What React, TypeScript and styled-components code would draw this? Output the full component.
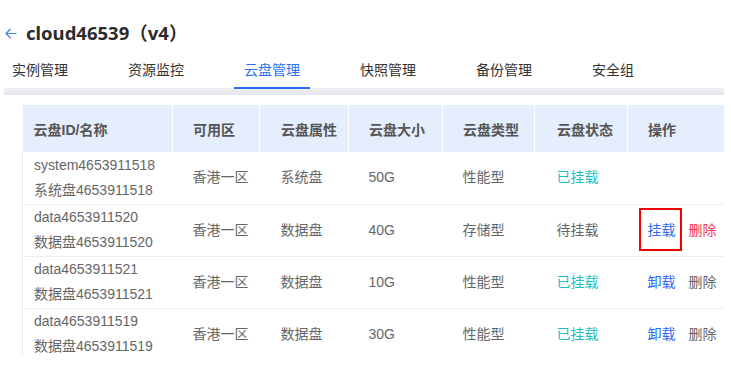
import { createGlobalStyle, css } from "styled-components";
import styled from "styled-components";

const GlobalStyle = createGlobalStyle`
  html, body {
    margin: 0;
    padding: 0;
    background: #ffffff;
  }
  body {
    font-family: "Liberation Sans", "Noto Sans CJK SC", sans-serif;
    font-size: 14px;
    color: #333;
  }
`;

const Page = styled.div`
  width: 731px;
  height: 370px;
  overflow: hidden;
`;

const TitleRow = styled.div`
  display: flex;
  align-items: center;
  gap: 9px;
  height: 26px;
  margin-top: 20px;
  padding-left: 5px;
`;

const BackIcon = styled.svg`
  width: 12px;
  height: 11px;
  flex: none;
`;

const Title = styled.h1`
  margin: 0;
  font-family: "Noto Sans", "Noto Sans CJK SC", sans-serif;
  font-size: 18.5px;
  font-weight: 700;
  line-height: 26px;
  color: #2b2b2b;
`;

const TabBar = styled.div`
  display: flex;
  gap: 40px;
  padding-left: 2px;
  height: 43px;
  position: relative;
  z-index: 1;
`;

const Tab = styled.div<{ $active?: boolean }>`
  box-sizing: border-box;
  height: 43px;
  padding: 5px 10px 0;
  display: flex;
  align-items: center;
  font-family: "Noto Sans CJK SC", sans-serif;
  font-size: 14px;
  color: #333;
  border-bottom: 2px solid transparent;
  padding-bottom: 0;
  ${({ $active }) =>
    $active &&
    css`
      color: #2a72ee;
      border-bottom-color: #1d6ff2;
    `}
`;

const GrayBar = styled.div`
  margin-left: 4px;
  width: 720px;
  height: 7px;
  margin-top: -1px;
  background: linear-gradient(#eeeff3, #e6e7ec);
`;

const TableArea = styled.div`
  width: 720px;
  margin-left: 4px;
  height: 260px;
  padding: 10px 0 0 18px;
  box-sizing: border-box;
  overflow: hidden;
`;

const Table = styled.table`
  border-collapse: collapse;
  table-layout: fixed;
  width: 720px;
`;

const HeadCell = styled.th<{ $pad: number }>`
  height: 47px;
  padding: 0 0 0 ${({ $pad }) => $pad}px;
  background: #e4eefc;
  border-right: 1px solid #ffffff;
  text-align: left;
  font-family: "Liberation Sans", "Noto Sans CJK SC", sans-serif;
  font-weight: 700;
  font-size: 14px;
  color: #555;
  box-sizing: border-box;
`;

const Row = styled.tr`
  border-bottom: 1px solid #ebedf2;
`;

const Cell = styled.td<{ $pad: number }>`
  height: 52px;
  padding: 0 0 0 ${({ $pad }) => $pad}px;
  font-size: 14px;
  color: #666;
  line-height: 25px;
  vertical-align: middle;
  white-space: nowrap;
  box-sizing: border-box;
  &:first-child {
    border-left: 1px solid #ebedf2;
  }
`;

const Status = styled.span<{ $mounted: boolean }>`
  color: ${({ $mounted }) => ($mounted ? "#1cc0c4" : "#666")};
`;

const Actions = styled.div`
  display: flex;
  gap: 13px;
`;

const ActionLink = styled.span<{ $tone: "blue" | "red" | "gray"; $marked?: boolean }>`
  position: relative;
  cursor: pointer;
  color: ${({ $tone }) =>
    $tone === "blue" ? "#2a6cf0" : $tone === "red" ? "#f2394f" : "#666"};
  ${({ $marked }) =>
    $marked &&
    css`
      &::after {
        content: "";
        position: absolute;
        left: -9px;
        right: -6px;
        top: -10px;
        bottom: -8px;
        border: 2px solid #f40000;
      }
    `}
`;

const columns = [
  { title: "云盘ID/名称", width: 150, pad: 11 },
  { title: "可用区", width: 87, pad: 20 },
  { title: "云盘属性", width: 89, pad: 21 },
  { title: "云盘大小", width: 94, pad: 20 },
  { title: "云盘类型", width: 92, pad: 20 },
  { title: "云盘状态", width: 93, pad: 22 },
  { title: "操作", width: 115, pad: 20 },
];

const tabs = ["实例管理", "资源监控", "云盘管理", "快照管理", "备份管理", "安全组"];

interface Disk {
  id: string;
  name: string;
  zone: string;
  attr: string;
  size: string;
  type: string;
  mounted: boolean;
  actions: "none" | "mount" | "unmount";
}

const disks: Disk[] = [
  {
    id: "system4653911518",
    name: "系统盘4653911518",
    zone: "香港一区",
    attr: "系统盘",
    size: "50G",
    type: "性能型",
    mounted: true,
    actions: "none",
  },
  {
    id: "data4653911520",
    name: "数据盘4653911520",
    zone: "香港一区",
    attr: "数据盘",
    size: "40G",
    type: "存储型",
    mounted: false,
    actions: "mount",
  },
  {
    id: "data4653911521",
    name: "数据盘4653911521",
    zone: "香港一区",
    attr: "数据盘",
    size: "10G",
    type: "性能型",
    mounted: true,
    actions: "unmount",
  },
  {
    id: "data4653911519",
    name: "数据盘4653911519",
    zone: "香港一区",
    attr: "数据盘",
    size: "30G",
    type: "性能型",
    mounted: true,
    actions: "unmount",
  },
];

const renderActions = (disk: Disk) => {
  if (disk.actions === "none") return null;
  if (disk.actions === "mount") {
    return (
      <Actions>
        <ActionLink $tone="blue" $marked>
          挂载
        </ActionLink>
        <ActionLink $tone="red">删除</ActionLink>
      </Actions>
    );
  }
  return (
    <Actions>
      <ActionLink $tone="blue">卸载</ActionLink>
      <ActionLink $tone="gray">删除</ActionLink>
    </Actions>
  );
};

export default function App() {
  return (
    <Page>
      <GlobalStyle />
      <TitleRow>
        <BackIcon viewBox="0 0 12 11">
          <path
            d="M11.5 5.5H1M5.5 1L1 5.5L5.5 10"
            fill="none"
            stroke="#3f7ff2"
            strokeWidth="1.2"
          />
        </BackIcon>
        <Title>cloud46539（v4）</Title>
      </TitleRow>
      <TabBar>
        {tabs.map((tab) => (
          <Tab key={tab} $active={tab === "云盘管理"}>
            {tab}
          </Tab>
        ))}
      </TabBar>
      <GrayBar />
      <TableArea>
        <Table>
          <colgroup>
            {columns.map((c) => (
              <col key={c.title} style={{ width: c.width }} />
            ))}
          </colgroup>
          <thead>
            <tr>
              {columns.map((c) => (
                <HeadCell key={c.title} $pad={c.pad}>
                  {c.title}
                </HeadCell>
              ))}
            </tr>
          </thead>
          <tbody>
            {disks.map((d) => (
              <Row key={d.id}>
                <Cell $pad={columns[0].pad}>
                  {d.id}
                  <br />
                  {d.name}
                </Cell>
                <Cell $pad={columns[1].pad}>{d.zone}</Cell>
                <Cell $pad={columns[2].pad}>{d.attr}</Cell>
                <Cell $pad={columns[3].pad}>{d.size}</Cell>
                <Cell $pad={columns[4].pad}>{d.type}</Cell>
                <Cell $pad={columns[5].pad}>
                  <Status $mounted={d.mounted}>{d.mounted ? "已挂载" : "待挂载"}</Status>
                </Cell>
                <Cell $pad={columns[6].pad}>{renderActions(d)}</Cell>
              </Row>
            ))}
          </tbody>
        </Table>
      </TableArea>
    </Page>
  );
}
